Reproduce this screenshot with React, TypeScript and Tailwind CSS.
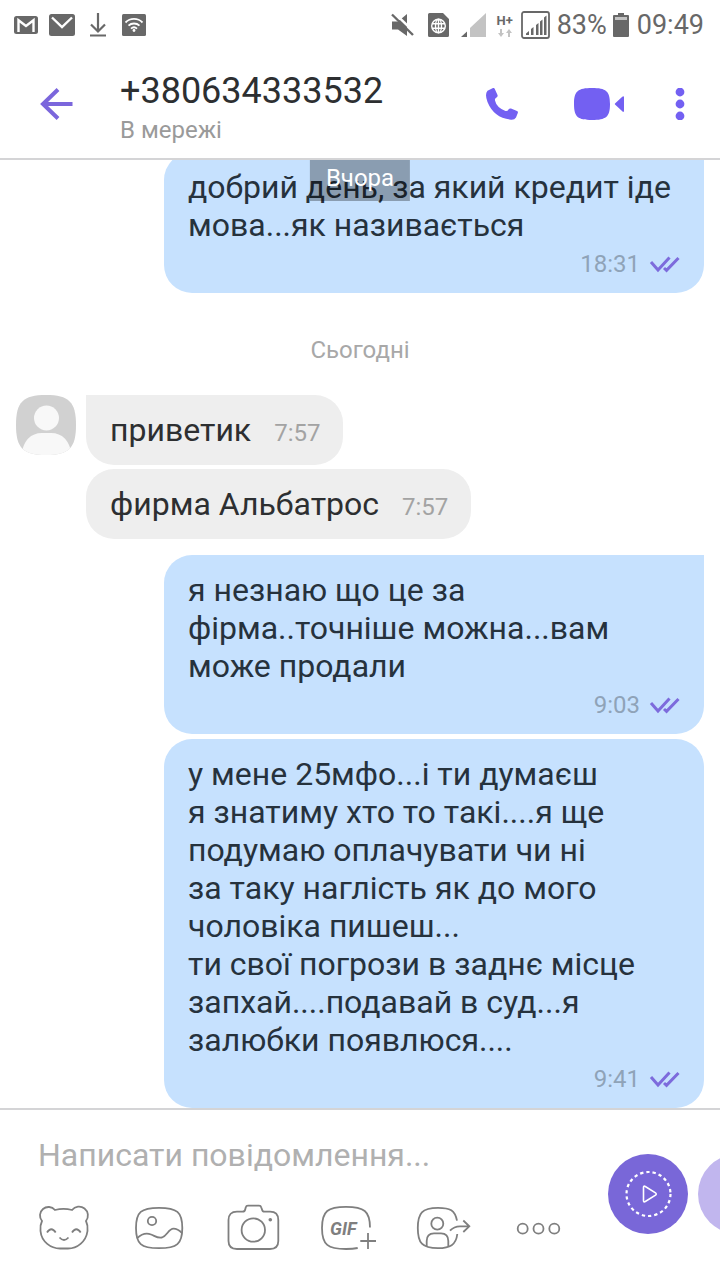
import type { ReactNode } from "react";
import clsx from "clsx";

const STATUS = "#686868";

const Ticks = () => (
  <svg className="h-5 w-8" viewBox="0 0 32 20" fill="none" stroke="#7d6bdc" strokeWidth="3">
    <path d="M3 8 10 16 21.500 3.500M16 14l2.500 2.300L30.500 4" />
  </svg>
);

const StatusBar = () => (
  <div className="flex h-[50px] items-center justify-between pr-4 pl-3.5 text-[27px] text-[#686868]">
    <div className="flex items-center">
      <svg className="mr-[11px] h-6 w-6" viewBox="0 0 24 24">
        <rect y="3" width="24" height="18" rx="2.500" fill={STATUS} />
        <path d="M4.500 19V7.200L12 13l7.500-5.800V19" fill="none" stroke="#fff" strokeWidth="2.400" />
      </svg>
      <svg className="mr-[15px] h-6 w-[26px]" viewBox="0 0 26 24">
        <rect y="1" width="26" height="22" rx="2.500" fill={STATUS} />
        <path d="M3 4.500 13 14 23 4.500" fill="none" stroke="#fff" strokeWidth="2.400" />
      </svg>
      <svg className="mr-4 h-6 w-4" viewBox="0 0 16 24" fill="none" stroke={STATUS} strokeWidth="2.200">
        <path d="M8 0v19M1 11.500l7 7 7-7M0 22.500h16" />
      </svg>
      <svg className="h-6 w-6" viewBox="0 0 24 24">
        <rect y="1" width="24" height="22" rx="1.500" fill={STATUS} />
        <g fill="none" stroke="#fff" strokeWidth="1.800">
          <path d="M3.500 9.500a12 12 0 0 1 17 0M6.500 12.700a8 8 0 0 1 11 0M9 15.600a4.500 4.500 0 0 1 6 0" />
        </g>
        <circle cx="12" cy="17.500" r="1.400" fill="#fff" />
      </svg>
    </div>
    <div className="flex items-center">
      <svg className="mr-[14px] h-6 w-[23px]" viewBox="0 0 23 24">
        <path d="M1 8.500h6L16 1v22l-9-6.500H1z" fill={STATUS} />
        <path d="M2.500 -1 24 20" stroke="#fff" strokeWidth="2.500" />
        <path d="M1 1.500 22 22" stroke={STATUS} strokeWidth="2.400" />
      </svg>
      <svg className="mr-3 h-6 w-[21px]" viewBox="0 0 21 24">
        <path d="M1.500 0H15l6 6v16.500a1.500 1.500 0 0 1-1.500 1.500h-18A1.500 1.500 0 0 1 0 22.500v-21A1.500 1.500 0 0 1 1.500 0z" fill={STATUS} />
        <g fill="none" stroke="#fff" strokeWidth="1.400">
          <circle cx="10.500" cy="13" r="6.800" />
          <ellipse cx="10.500" cy="13" rx="3" ry="6.800" />
          <path d="M10.500 6v14M4 10.700h13M4 15.300h13" />
        </g>
      </svg>
      <svg className="mr-2.5 h-6 w-[25px]" viewBox="0 0 25 24">
        <path d="M25 0v24H9V15z" fill="#c3c3c3" />
        <path d="M6 18.500V24H0z" fill={STATUS} />
      </svg>
      <div className="mr-[7px] flex w-[18px] flex-col items-center">
        <span className="text-[13px] leading-[13px] font-bold">H+</span>
        <svg className="mt-0.5 h-2 w-3.5" viewBox="0 0 14 8" fill="#c3c3c3">
          <path d="M2 0h2v4h2L3 8 0 4h2zM10 8h2V4h2l-3-4-3 4h2z" />
        </svg>
      </div>
      <svg className="mr-[7px] h-7 w-[29px]" viewBox="0 0 29 28">
        <rect x="1" y="1" width="27" height="26" rx="2" fill="none" stroke={STATUS} strokeWidth="1.800" />
        <path d="M5 24v-1.500L8 20v4zM10 24v-6l2.500-2v8zM15 24V14l2.500-2v12zM19 24V10.500L21.500 8.500V24zM23 24V6.500L25.500 4.500V24z" fill={STATUS} />
      </svg>
      <span className="mr-1.5">83%</span>
      <svg className="mr-2 h-6 w-4" viewBox="0 0 16 24">
        <path d="M5 0h6v2h4q1 0 1 1v20q0 1-1 1H1q-1 0-1-1V3q0-1 1-1h4z" fill={STATUS} />
        <path d="M2 4h12v3H2z" fill="#c3c3c3" />
      </svg>
      <span>09:49</span>
    </div>
  </div>
);

const Header = () => (
  <header className="flex h-[108px] items-center pr-8 pl-9 text-[#7360f2]">
    <button aria-label="Назад" className="mr-[44px] flex">
      <svg className="h-10 w-10" viewBox="0 0 40 40" fill="none" stroke="#7b66dc" strokeWidth="4">
        <path d="M36.500 20H7M22 5.500 7 20l15 14.500" />
      </svg>
    </button>
    <div className="flex-1 pt-2">
      <h1 className="text-4xl leading-[42px] text-[#2d2f31]">+380634333532</h1>
      <p className="mt-0.5 text-2xl leading-8 text-[#9a9a9a]">В мережі</p>
    </div>
    <button aria-label="Подзвонити" className="mr-[56px] flex">
      <svg className="h-8 w-8" viewBox="0 0 32 32" fill="currentColor">
        <path d="M1.500 2.800 6.500.200Q8 -.500 8.800.900L11.500 7Q12 8.500 10.500 9.500 8.500 10.800 9 12.500 10.500 19.500 19.500 23 21.500 23.500 22.500 21.500 23.500 20 25 20.500L31 23Q32.300 23.700 31.800 25L30 29.500Q28.500 32 25 31.700 8 30 1.500 14 -1.500 6 1.500 2.800z" />
      </svg>
    </button>
    <button aria-label="Відеодзвінок" className="mr-[47px] flex">
      <svg className="h-8 w-[51px]" viewBox="0 0 51 32" fill="currentColor">
        <path d="M18 0C32 0 36 3 36 16S32 32 18 32 0 29 0 16 4 0 18 0zM41 15.500 48 9Q50 7.500 50 9.500v13Q50 25 48 23L41 16.500q-.500-.500 0-1z" />
      </svg>
    </button>
    <button aria-label="Меню" className="flex">
      <svg className="h-8 w-4" viewBox="0 0 16 32" fill="currentColor">
        <circle cx="8" cy="4" r="4.400" />
        <circle cx="8" cy="16" r="4.400" />
        <circle cx="8" cy="28" r="4.400" />
      </svg>
    </button>
  </header>
);

const Sent = ({ text, time, first }: { text: string; time: string; first?: boolean }) => (
  <div className={clsx("ml-37 rounded-[28px] bg-[#c6e1fe] px-6 pt-4 pb-[15px]", first && "rounded-tr-none")}>
    <p className="text-[32px] leading-[38px] whitespace-pre-line text-[#26323d]">{text}</p>
    <div className="mt-1.5 flex items-center justify-end gap-2 text-2xl leading-7 text-[#8fa3b8]">
      {time}
      <Ticks />
    </div>
  </div>
);

const Received = ({ text, time, first }: { text: string; time: string; first?: boolean }) => (
  <div className={clsx("flex h-[70px] items-center gap-[23px] rounded-[28px] bg-[#eeeeee] pr-[23px] pl-6", first && "rounded-tl-none")}>
    <p className="text-[32px] leading-[38px] text-[#2d2f31]">{text}</p>
    <span className="pt-1.5 text-2xl text-[#a3a3a3]">{time}</span>
  </div>
);

const Chat = () => (
  <main className="relative flex min-h-0 flex-1 flex-col justify-end overflow-hidden border-y-2 border-[#d4d4d6] px-4">
    <Sent text="добрий день, за який кредит іде мова...як називається" time="18:31" first />
    <p className="mt-[43px] mb-[31px] text-center text-2xl leading-7 text-[#a8a8a8]">Сьогодні</p>
    <div className="mb-4 flex gap-2.5">
      <svg className="h-15 w-15" viewBox="0 0 60 60">
        <clipPath id="avatar">
          <path d="M30 0C53 0 60 7 60 30S53 60 30 60 0 53 0 30 7 0 30 0z" />
        </clipPath>
        <g clipPath="url(#avatar)">
          <path d="M0 0h60v60H0z" fill="#d1d1d1" />
          <circle cx="30.500" cy="23" r="12.500" fill="#f8f8f8" />
          <path d="M5 60Q9 38 26 38h9q17 0 21 22z" fill="#f8f8f8" />
        </g>
      </svg>
      <div className="flex flex-col items-start gap-1">
        <Received text="приветик" time="7:57" first />
        <Received text="фирма Альбатрос" time="7:57" />
      </div>
    </div>
    <div className="flex flex-col gap-[5px]">
      <Sent text="я незнаю що це за фірма..точніше можна...вам може продали" time="9:03" first />
      <Sent
        text={`у мене 25мфо...і ти думаєш
я знатиму хто то такі....я ще
подумаю оплачувати чи ні
за таку наглість як до мого
чоловіка пишеш...
ти свої погрози в заднє місце
запхай....подавай в суд...я
залюбки появлюся....`}
        time="9:41"
      />
    </div>
    <div className="absolute top-0 left-1/2 -translate-x-1/2 bg-black/30 px-4 pt-1 pb-[9px] text-2xl leading-7 text-white">
      Вчора
    </div>
  </main>
);

const Tool = ({ label, children }: { label: string; children: ReactNode }) => (
  <button aria-label={label} className="flex">
    <svg className="h-12 w-14" viewBox="0 0 56 48" fill="none" stroke="#7f7f7f" strokeWidth="1.800">
      {children}
    </svg>
  </button>
);

const Composer = () => (
  <footer className="flex items-center">
    <div className="flex flex-1 flex-col pt-[23px] pr-[41px] pb-7 pl-9">
      <input
        aria-label="Повідомлення"
        placeholder="Написати повідомлення..."
        className="h-11 w-full pl-0.5 text-[32px] text-[#2d2f31] outline-none placeholder:text-[#b0b0b0]"
      />
      <div className="mt-[27px] flex justify-between">
        <Tool label="Стікери">
          <path d="M19 6C24 4.700 31 4.700 36 6A8.200 8.200 0 1 1 50 17C51.500 20 52 23 51.500 27 50 38 41 44.500 32 44.500H24C15 44.500 5.500 38 4.500 27 4 23 4.500 20 6 17A8.200 8.200 0 1 1 19 6Z" />
          <path d="M11 28.500q4.300-6.500 8.700 0M36 28.500q4.300-6.500 8.700 0M23.500 33.500q4.500 5 9 0" />
        </Tool>
        <Tool label="Галерея">
          <path d="M28 3.800C46 3.800 51.300 8 51.300 24S46 44.200 28 44.200 5 40 5 24 10 3.800 28 3.800z" />
          <circle cx="21" cy="17" r="4.200" />
          <path d="M6 34.300C10 30.500 15 28.500 20 30.500 24 32 26.500 34.500 31 33.500 36 32 37.500 24.700 42.500 24.700 46 24.700 48.500 26.500 50.800 29" />
        </Tool>
        <Tool label="Камера">
          <path d="M11 7.700H16.500Q18.800 7.700 19.200 5.500L19.700 3.500Q20.200 1.700 22 1.700H33Q34.800 1.700 35.300 3.500L36 5.500Q36.500 7.700 38.500 7.700H44Q52.300 7.700 52.300 16V37Q52.300 45 44 45H11Q2.500 45 2.500 37V16Q2.500 7.700 11 7.700z" />
          <circle cx="27.300" cy="26" r="11.700" />
          <circle cx="44.300" cy="15.700" r="1.800" fill="#7f7f7f" stroke="none" />
        </Tool>
        <Tool label="GIF">
          <path d="M49 23.500C49 7 43 2.800 25 2.800S1 7 1 24 7 45 25 45Q32 45 36.700 44M47 29v16M39.300 37h15.700" />
          <text x="9" y="30.500" fontSize="18" fontWeight="700" fontStyle="italic" fill="#7f7f7f" stroke="none">
            GIF
          </text>
        </Tool>
        <Tool label="Контакт">
          <path d="M41 16.700C39 6 34 3.800 22 3.800 6 3.800 1.800 9 1.800 24S6 44.200 22 44.200C34 44.200 40 41 41.300 30" />
          <circle cx="21.300" cy="19.700" r="6" />
          <path d="M10.700 42.500V37Q10.700 29.300 18 29.300h7Q32.300 29.300 32.300 37v5.500M34 26.700Q38 22.300 44 22.300h9M47.300 16.500l6 5.800-6 5.700" />
        </Tool>
        <Tool label="Більше">
          <circle cx="11.700" cy="24.700" r="5" />
          <circle cx="27.500" cy="24.700" r="5" />
          <circle cx="43.300" cy="24.700" r="5" />
        </Tool>
      </div>
    </div>
    <div className="mb-0.5 flex w-28 shrink-0 gap-2.5 overflow-hidden">
      <button aria-label="Відео" className="flex size-20 shrink-0 items-center justify-center rounded-full bg-[#7967d8]">
        <svg className="size-12" viewBox="0 0 48 48" fill="none" stroke="#fff">
          <circle cx="24.500" cy="24" r="22" strokeWidth="2.200" strokeDasharray="3.300 3" />
          <path d="M19.500 17.500Q19.500 15.500 21.300 16.500L31.500 22.800Q33 24 31.500 25.200L21.300 31.500Q19.500 32.500 19.500 30.500z" strokeWidth="1.600" />
        </svg>
      </button>
      <button aria-label="Голосове повідомлення" className="size-20 shrink-0 rounded-full bg-[#c1b6ee]" />
    </div>
  </footer>
);

export default function App() {
  return (
    <div className="flex h-screen flex-col bg-white font-[Roboto,sans-serif]">
      <StatusBar />
      <Header />
      <Chat />
      <Composer />
    </div>
  );
}
